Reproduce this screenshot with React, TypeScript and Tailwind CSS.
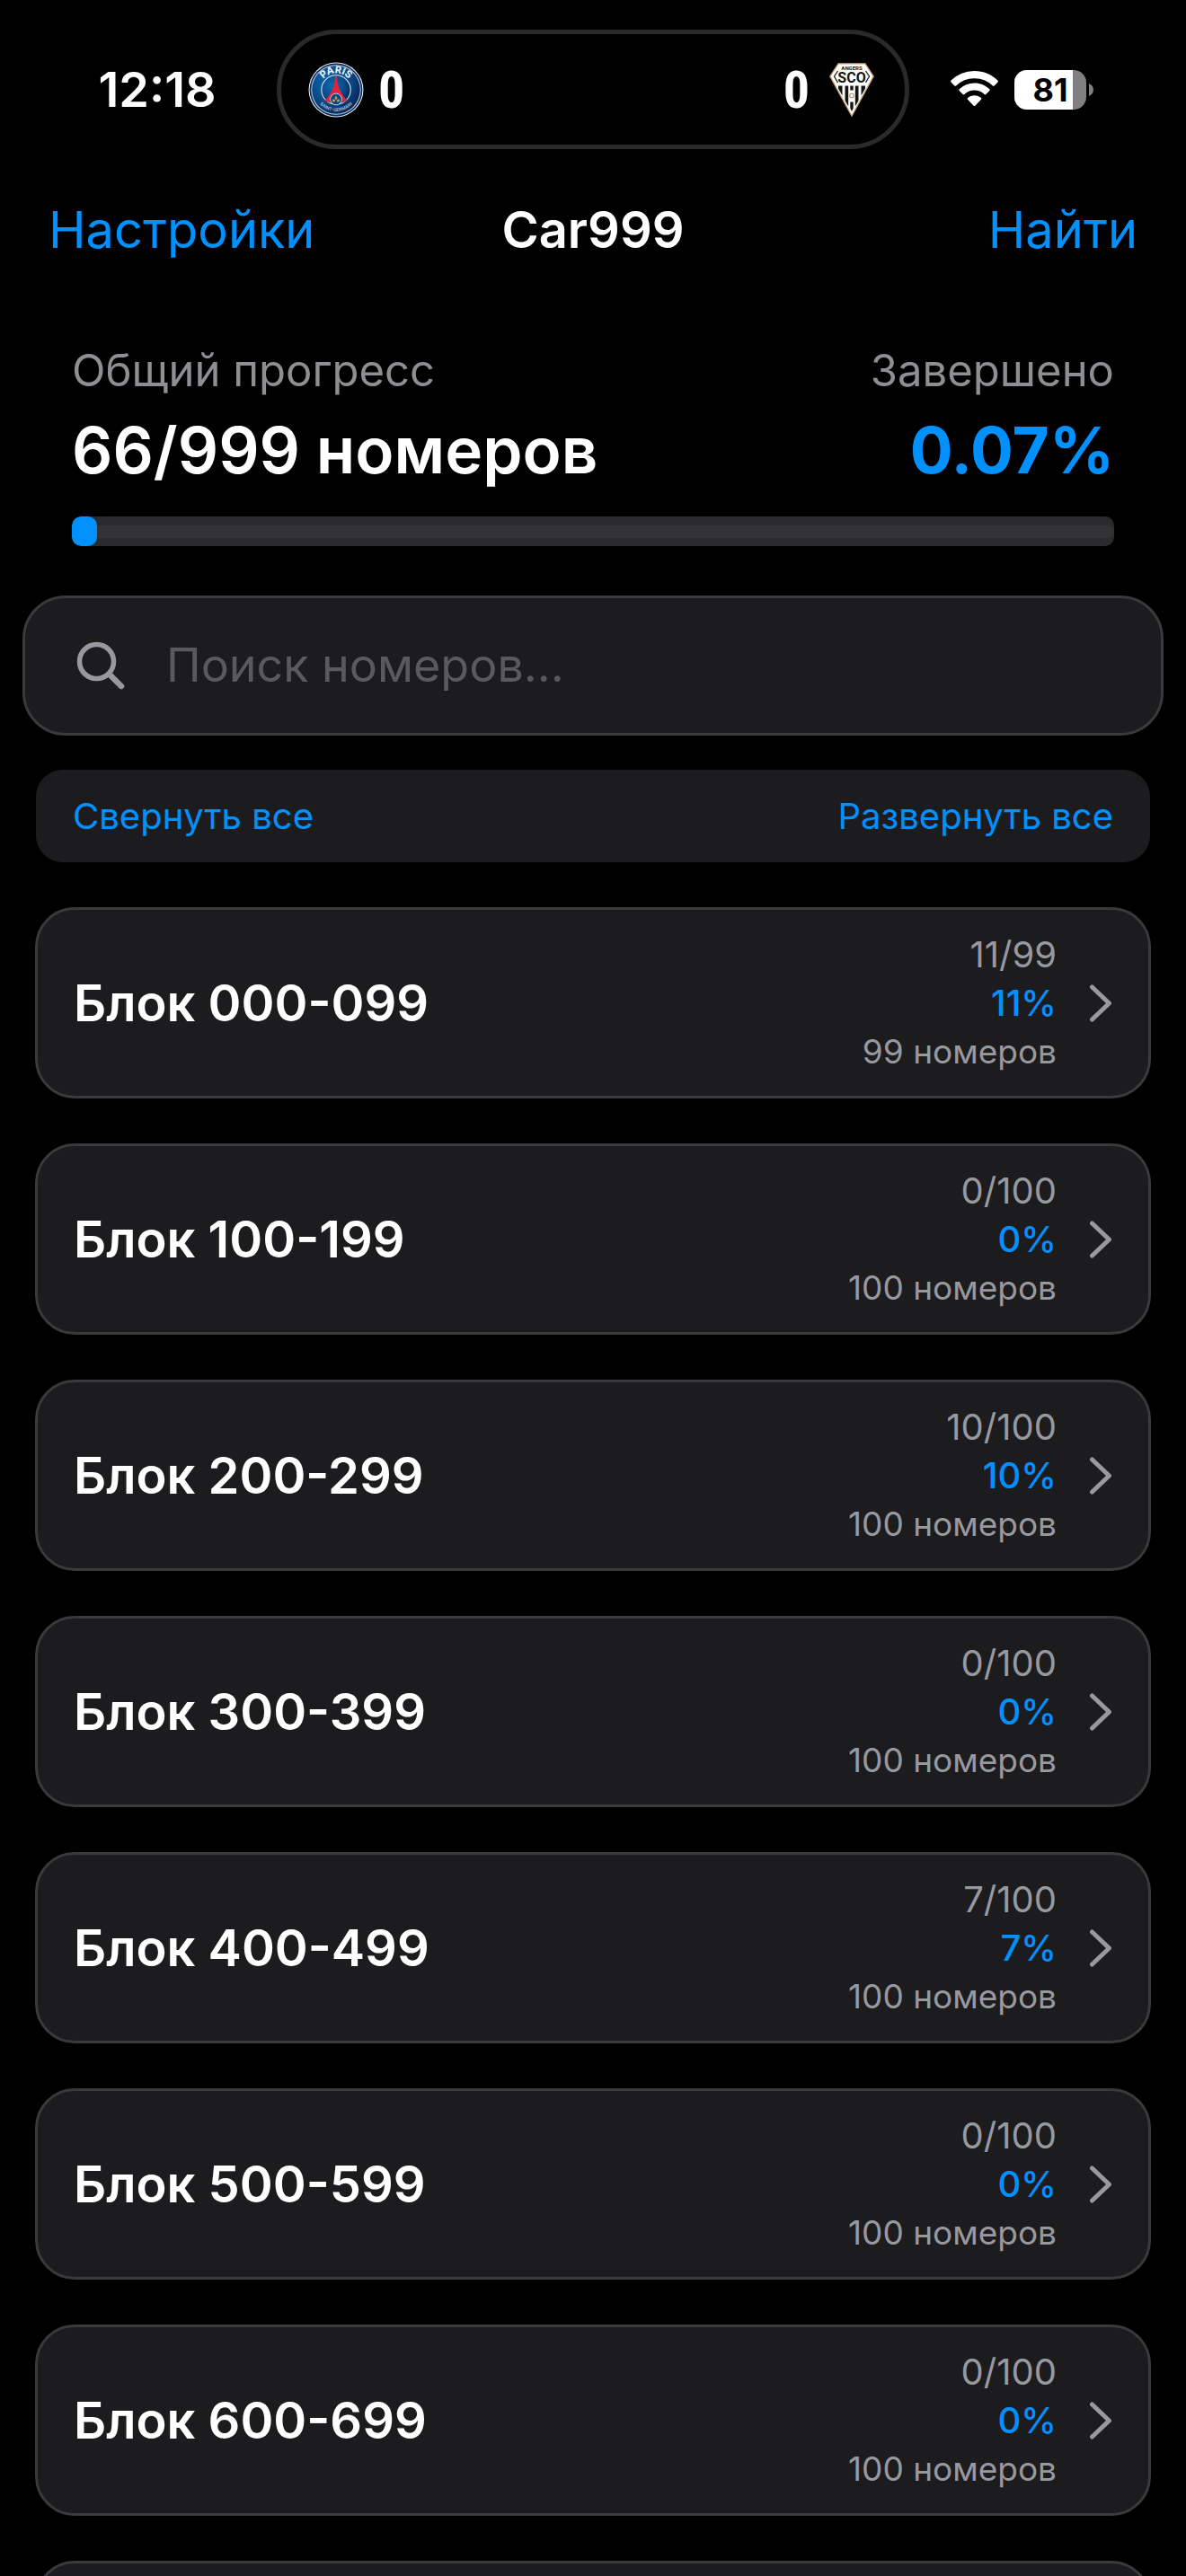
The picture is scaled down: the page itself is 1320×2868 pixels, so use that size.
import React, { useState } from "react";

type Block = { range: string; done: number; total: number };

const blocks: Block[] = [
  { range: "000-099", done: 11, total: 99 },
  { range: "100-199", done: 0, total: 100 },
  { range: "200-299", done: 10, total: 100 },
  { range: "300-399", done: 0, total: 100 },
  { range: "400-499", done: 7, total: 100 },
  { range: "500-599", done: 0, total: 100 },
  { range: "600-699", done: 0, total: 100 },
  { range: "700-799", done: 0, total: 100 },
];

function ParisCrest() {
  return (
    <svg viewBox="0 0 62 62" className="size-[62px]" aria-label="Paris Saint-Germain" role="img">
      <defs>
        <radialGradient id="psg-blue" cx="0.38" cy="0.35" r="0.7">
          <stop offset="0" stopColor="#0a6db0" />
          <stop offset="0.6" stopColor="#0a4a87" />
          <stop offset="1" stopColor="#0a2350" />
        </radialGradient>
        <path id="psg-top" d="M12.500 31a18.500 18.500 0 0 1 37 0" />
        <path id="psg-bottom" d="M7 31a24 24 0 0 0 48 0" />
      </defs>
      <circle cx="31" cy="31" r="30.500" fill="#dfe5ec" />
      <circle cx="31" cy="31" r="29.400" fill="#0b2a5c" />
      <circle cx="31" cy="31" r="27.800" fill="#b9cbe0" />
      <circle cx="31" cy="31" r="26.800" fill="url(#psg-blue)" />
      <circle cx="31" cy="31" r="16.200" fill="url(#psg-blue)" stroke="#d5e0ec" strokeWidth="1.100" />
      <path
        d="M31 15.500c.7 0 1 .6 1.100 2 .5 8.500 3.500 17 11.400 25.500l-5 2.200c-1.300-4.500-4-6.700-7.500-6.700s-6.200 2.200-7.500 6.700l-5-2.200C26.400 34.500 29.400 26 29.900 17.500c.1-1.400.4-2 1.100-2Z"
        fill="#e0243f"
      />
      <circle cx="31" cy="41.500" r="6.400" fill="#0b4583" stroke="#d5e0ec" strokeWidth="0.900" />
      <path d="M31 37.500l1.500 2.800-1.500 2.200-1.500-2.200zM27.600 41.300l2.600 1-.7 2.300-2.500-.7zM34.400 41.300l-2.600 1 .7 2.300 2.500-.7z" fill="#c9a544" />
      <text fill="#f1f5f9" fontFamily="Inter, sans-serif" fontSize="11" fontWeight="700">
        <textPath href="#psg-top" startOffset="50%" textAnchor="middle">PARIS</textPath>
      </text>
      <text fill="#a9c0d8" fontFamily="Inter, sans-serif" fontSize="5" fontWeight="600">
        <textPath href="#psg-bottom" startOffset="50%" textAnchor="middle">SAINT-GERMAIN</textPath>
      </text>
    </svg>
  );
}

function AngersCrest() {
  return (
    <svg viewBox="0 0 50 60" className="h-[60px] w-[50px]" aria-label="Angers SCO" role="img">
      <path d="M10 .8h30L49.200 15 25 59.200.8 15Z" fill="#fff" stroke="#c49a6c" strokeWidth="1.300" />
      <path d="M9.500 9 5.500 15l4 7M40.500 9l4 6-4 7" fill="none" stroke="#1b1b1b" strokeWidth="1.300" />
      <path
        d="M10 25.500h4.500v11L10 28.500ZM17.500 25.500h3.700v23l-3.700-6.500ZM28.800 25.500h3.700V42l-3.700 6.500ZM35.500 25.500H40v3l-4.500 8ZM23.300 25.500h3.400v5h-3.400ZM23.300 43.500h3.400v7L25 54l-1.700-3.500Z"
        fill="#141414"
      />
      <circle cx="25" cy="36.500" r="2.300" fill="#fff" stroke="#c49a6c" strokeWidth="1.200" />
      <text x="25" y="7.500" textAnchor="middle" fill="#141414" fontFamily="Roboto, sans-serif" fontSize="6" fontWeight="700">
        ANGERS
      </text>
      <text x="25" y="22" textAnchor="middle" fill="#141414" fontFamily="Roboto, sans-serif" fontSize="16" fontWeight="700">
        SCO
      </text>
    </svg>
  );
}

function WifiIcon() {
  return (
    <svg viewBox="0 0 53 41" className="h-[41px] w-[53px]" fill="#fff" aria-label="Wi-Fi" role="img">
      <path d="M26.500 0C36.600 0 45.800 4 52.500 10.600c.5.500.5 1.300 0 1.800l-3.900 4c-.5.500-1.200.5-1.700 0A29 29 0 0 0 26.500 8.200 29 29 0 0 0 6.100 16.400c-.5.500-1.200.5-1.700 0l-3.900-4c-.5-.5-.5-1.300 0-1.800A37 37 0 0 1 26.500 0Z" />
      <path d="M26.500 13.600c6.500 0 12.400 2.500 16.800 6.700.5.500.5 1.200 0 1.700l-4 4.100c-.5.500-1.200.5-1.700 0a16 16 0 0 0-22.200 0c-.5.500-1.200.5-1.700 0l-4-4.100c-.5-.5-.5-1.200 0-1.700a24.300 24.300 0 0 1 16.800-6.700Z" />
      <path d="M26.500 27.200c2.900 0 5.500 1.100 7.500 2.900.5.500.5 1.200 0 1.700l-6.700 6.900c-.5.500-1.200.5-1.700 0L19 31.800c-.5-.5-.5-1.200 0-1.700 2-1.800 4.600-2.900 7.500-2.900Z" />
    </svg>
  );
}

function Battery({ level }: { level: number }) {
  return (
    <div className="flex items-center gap-[3px]">
      <div className="relative flex h-11 w-20 items-center justify-center overflow-hidden rounded-[14px] bg-[#808080]">
        <div className="absolute inset-y-0 left-0 bg-white" style={{ width: `${level}%` }} />
        <span className="relative text-[36px] leading-none font-bold text-black">{level}</span>
      </div>
      <svg viewBox="0 0 5 14" className="h-3.5 w-[5px]" fill="#808080" aria-hidden="true">
        <path d="M0 0c3 1.200 5 3.800 5 7s-2 5.800-5 7Z" />
      </svg>
    </div>
  );
}

function Score({ value }: { value: number }) {
  return (
    <span className="font-['Roboto_Condensed','Open_Sans_Condensed','Roboto',sans-serif] text-[58px] leading-none font-bold">
      {value}
    </span>
  );
}

function StatusBar() {
  return (
    <div className="grid grid-cols-[1fr_704px_1fr] items-center pt-[33px]">
      <div className="pl-[42px] text-center text-[54px] leading-none font-semibold">12:18</div>
      <div className="flex h-[133px] items-center justify-between rounded-full border-[5px] border-[#2a2a2a] px-[30px]">
        <div className="flex items-center gap-4">
          <ParisCrest />
          <Score value={0} />
        </div>
        <div className="flex items-center gap-[22px] pr-1">
          <Score value={0} />
          <AngersCrest />
        </div>
      </div>
      <div className="flex items-center gap-[18px] pl-[46px]">
        <WifiIcon />
        <Battery level={81} />
      </div>
    </div>
  );
}

function BlockRow({ block }: { block: Block }) {
  const percent = Math.round((block.done / block.total) * 100);
  return (
    <li>
      <button
        type="button"
        className="flex h-[213px] w-full items-center rounded-[44px] border-[3px] border-[#3a3a3c] bg-[#1c1c1e] px-10 text-left"
      >
        <span className="flex-1 text-[56px] leading-[68px] font-semibold text-white">Блок {block.range}</span>
        <span className="flex flex-col text-right leading-[54px] text-[#98989f]">
          <span className="text-[40px]">
            {block.done}/{block.total}
          </span>
          <span className="text-[40px] font-medium text-[#0091ff]">{percent}%</span>
          <span className="text-[37px]">{block.total} номеров</span>
        </span>
        <svg
          viewBox="0 0 26 42"
          className="ml-9 h-[42px] w-[26px]"
          fill="none"
          stroke="#98989f"
          strokeWidth="5"
          strokeLinecap="round"
          strokeLinejoin="round"
          aria-hidden="true"
        >
          <path d="M3.500 3 22.500 21 3.500 39" />
        </svg>
      </button>
    </li>
  );
}

export default function App() {
  const [query, setQuery] = useState("");
  const shown = blocks.filter((b) => b.range.includes(query.trim()));

  return (
    <div className="h-screen overflow-x-hidden overflow-y-auto bg-black font-['Inter','Liberation_Sans',sans-serif] text-white [scrollbar-width:none]">
      <StatusBar />

      <header className="mt-14 grid grid-cols-[1fr_auto_1fr] items-center px-[54px] text-[56px] leading-[68px]">
        <button type="button" className="justify-self-start text-[#0091ff]">Настройки</button>
        <h1 className="font-semibold">Car999</h1>
        <button type="button" className="justify-self-end text-[#0091ff]">Найти</button>
      </header>

      <main>
        <section className="mt-[91px] px-20">
          <div className="flex justify-between text-[49px] leading-[64px] text-[#8e8e93]">
            <span id="progress-label">Общий прогресс</span>
            <span>Завершено</span>
          </div>
          <div className="mt-3 flex justify-between text-[71px] leading-[88px]">
            <span className="font-semibold">66/999 номеров</span>
            <span className="font-bold text-[#0091ff]">0.07%</span>
          </div>
          <div
            role="progressbar"
            aria-labelledby="progress-label"
            aria-valuenow={66}
            aria-valuemin={0}
            aria-valuemax={999}
            className="mt-[30px] flex h-[33px] items-center overflow-hidden rounded-[10px] bg-[#2b2b2d]"
          >
            <div className="h-full w-7 rounded-[10px] bg-[#0091ff]" />
            <div className="h-3.5 flex-1 rounded-r-full bg-[#333335]" />
          </div>
        </section>

        <div className="mx-[25px] mt-[55px] flex h-[156px] items-center rounded-[48px] border-[3px] border-[#3a3a3c] bg-[#1c1c1e] pr-12 pl-14">
          <svg viewBox="0 0 56 56" className="size-14" fill="none" stroke="#98989f" strokeLinecap="round" aria-hidden="true">
            <circle cx="23.500" cy="23.500" r="19" strokeWidth="5.500" />
            <path d="M38 38 51 51" strokeWidth="6.500" />
          </svg>
          <input
            type="text"
            aria-label="Поиск номеров"
            value={query}
            onChange={(e) => setQuery(e.target.value)}
            placeholder="Поиск номеров..."
            className="ml-[45px] min-w-0 flex-1 bg-transparent text-[52px] text-white outline-none placeholder:text-[#5a5a5e]"
          />
        </div>

        <div className="mx-10 mt-[38px] flex h-[103px] items-center justify-between rounded-[30px] bg-[#1c1c1e] px-[41px] text-[40px] text-[#0091ff]">
          <button type="button">Свернуть все</button>
          <button type="button">Развернуть все</button>
        </div>

        <ul className="mx-[39px] mt-[50px] flex flex-col gap-[50px]">
          {shown.map((b) => (
            <BlockRow key={b.range} block={b} />
          ))}
        </ul>
      </main>
    </div>
  );
}
